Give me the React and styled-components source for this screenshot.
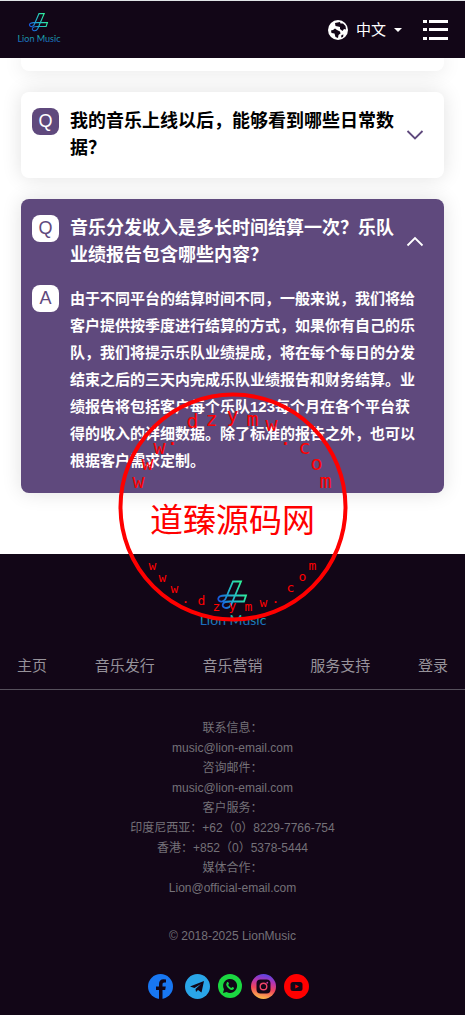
import React from "react";
import styled, { createGlobalStyle } from "styled-components";

const dark = "#120617";
const purple = "#5f497d";

const GlobalStyle = createGlobalStyle`
  * {
    box-sizing: border-box;
  }
  body {
    margin: 0;
    background: #fff;
    font-family: "Liberation Sans", "Noto Sans CJK SC", sans-serif;
  }
  h2, p, ul, nav {
    margin: 0;
    padding: 0;
  }
  a {
    color: inherit;
    text-decoration: none;
  }
  button {
    border: 0;
    background: none;
    font: inherit;
    color: inherit;
    padding: 0;
    cursor: pointer;
  }
`;

const Page = styled.div`
  position: relative;
  overflow: hidden;
`;

const Header = styled.header`
  position: relative;
  z-index: 1;
  display: flex;
  align-items: center;
  justify-content: space-between;
  height: 58px;
  padding: 0 17px;
  background: ${dark};
  border-top: 1px solid #dfe3e6;
`;

const HeaderTools = styled.div`
  display: flex;
  align-items: center;
`;

const LangButton = styled.button`
  display: flex;
  align-items: center;
  color: #fff;
  font-size: 15px;
  line-height: 24px;
  margin-right: 21px;
  span {
    margin: 0 8px;
  }
`;

const MenuButton = styled.button`
  display: flex;
`;

const FaqList = styled.main`
  display: flex;
  flex-direction: column;
  gap: 21px;
  padding: 0 21px 61px;
`;

const Card = styled.section`
  padding: 0 11px;
  border-radius: 8px;
  color: ${(p) => (p.$open ? "#fff" : "#000")};
  background: ${(p) => (p.$open ? purple : "#fff")};
  box-shadow: 0 0 20px rgba(0, 0, 0, 0.12);
`;

const CardEnd = styled(Card)`
  height: 13px;
  border-radius: 0 0 8px 8px;
`;

const Question = styled.button`
  display: flex;
  align-items: flex-start;
  width: 100%;
  padding: 16px 9px 16px 0;
  text-align: left;
  svg {
    flex: none;
    align-self: center;
  }
`;

const QuestionText = styled.span`
  flex: 1;
  font-size: 18px;
  font-weight: bold;
  line-height: 27px;
`;

const Answer = styled.div`
  display: flex;
  align-items: flex-start;
  padding: 0 16px 19px 0;
  p {
    flex: 1;
    font-size: 15px;
    font-weight: bold;
    line-height: 27px;
  }
`;

const Badge = styled.span`
  flex: none;
  width: 27px;
  height: 27px;
  margin-right: 11px;
  border-radius: 8px;
  font-size: 18px;
  line-height: 27px;
  text-align: center;
  color: ${(p) => (p.$light ? purple : "#fff")};
  background: ${(p) => (p.$light ? "#fff" : purple)};
`;

const Footer = styled.footer`
  display: flex;
  flex-direction: column;
  align-items: center;
  padding: 25px 0 16px;
  background: ${dark};
  color: #747178;
  font-size: 12px;
  line-height: 20px;
`;

const FooterNav = styled.nav`
  display: flex;
  justify-content: space-between;
  align-self: stretch;
  margin-top: 27px;
  padding: 0 17px 11px;
  border-bottom: 1px solid #56505c;
  color: #96929a;
  font-size: 15px;
  line-height: 24px;
`;

const Contact = styled.address`
  display: flex;
  flex-direction: column;
  align-items: center;
  padding: 28px 0;
  font-style: normal;
`;

const Social = styled.div`
  display: flex;
  margin-top: 28px;
  a {
    display: flex;
    margin-right: 8px;
  }
`;

const Stamp = styled.svg`
  position: absolute;
  z-index: 2;
  top: 392px;
  left: 50%;
  transform: translateX(-50%);
  pointer-events: none;
  text {
    font-family: "DejaVu Sans Mono", "Noto Sans CJK SC", monospace;
    fill: #f00;
    text-anchor: middle;
  }
`;

function Logo({ width, height, id }) {
  return (
    <svg width={width} height={height} viewBox="0 0 68 48" role="img" aria-label="Lion Music">
      <defs>
        <linearGradient id={id} gradientUnits="userSpaceOnUse" x1="20" y1="24" x2="46" y2="12">
          <stop offset="0" stopColor="#1650e0" />
          <stop offset="0.5" stopColor="#22b4cc" />
          <stop offset="1" stopColor="#2ff09a" />
        </linearGradient>
        <linearGradient id={id + "Text"} x1="0" y1="0" x2="0" y2="1">
          <stop offset="0.3" stopColor="#1cb5a8" />
          <stop offset="0.9" stopColor="#1a5cc4" />
        </linearGradient>
      </defs>
      <g fill="none" stroke={`url(#${id})`} strokeWidth="1.8">
        <path d="M26 21 L34 2.500 H42 L32 26 C29 31 22 29 24 25 C25 22 29 22.500 34 22.500 H45 L47 16.500 H26 C17 16.500 18 23 23 22.500 C26 22 27 19 28 16.500" />
      </g>
      <text
        x="34"
        y="46"
        textAnchor="middle"
        fontFamily="Lato, sans-serif"
        fontSize="14"
        fill={`url(#${id}Text)`}
      >
        Lion Music
      </text>
    </svg>
  );
}

function Globe() {
  return (
    <svg width="20" height="20" viewBox="0 0 20 20" aria-hidden="true">
      <circle cx="10" cy="10" r="10" fill="#fff" />
      <g fill={dark}>
        <path d="M7 3 L12 2 L12.500 3.500 L15 3.500 L17.500 6 L18 9.500 L16 9 L14.500 11 L12 9 L12 7 L10 6.500 L7.500 6 Z" />
        <path d="M3 10.500 L5 10 L7 8.500 L9 10 L12 11.500 L12.500 13.500 L10.500 15 L10 18 L7.500 17 L6.500 13.500 L3.500 13 Z" />
        <path d="M13.500 15 l2 -0.500 l-0.500 2.500 l-2 0.500 z" />
      </g>
    </svg>
  );
}

function Chevron({ up, color }) {
  return (
    <svg width="18" height="18" viewBox="0 0 18 18" aria-hidden="true">
      <path
        d={up ? "M1.500 12.500 L9 5 L16.500 12.500" : "M1.500 5 L9 12.500 L16.500 5"}
        fill="none"
        stroke={color}
        strokeWidth="1.8"
      />
    </svg>
  );
}

const nav = ["主页", "音乐发行", "音乐营销", "服务支持", "登录"];

const bigLetters = [
  ["w", 138, 488], ["w", 147, 470], ["w", 159, 454], [".", 172, 445],
  ["d", 192, 428], ["z", 211, 426], ["y", 232, 422], ["m", 252, 426],
  ["w", 271, 431], [".", 285, 445], ["c", 304, 454], ["o", 316, 470],
  ["m", 325, 488],
];

const smallLetters = [
  ["w", 152, 570], ["w", 162, 582], ["w", 174, 593], [".", 185, 603],
  ["d", 201, 605], ["z", 216, 611], ["y", 232, 610], ["m", 248, 611],
  ["w", 263, 607], [".", 275, 603], ["c", 290, 592], ["o", 302, 581],
  ["m", 312, 570],
];

export default function App() {
  return (
    <Page>
      <GlobalStyle />
      <Header>
        <a href="#home">
          <Logo width={44} height={31} id="headerLogo" />
        </a>
        <HeaderTools>
          <LangButton>
            <Globe />
            <span>中文</span>
            <svg width="8" height="4" viewBox="0 0 8 4" aria-hidden="true">
              <path d="M0 0 H8 L4 4 Z" fill="#fff" />
            </svg>
          </LangButton>
          <MenuButton aria-label="菜单">
            <svg width="25" height="22" viewBox="0 0 25 22" fill="#fff" aria-hidden="true">
              <path d="M0 1h4v3H0zM6 1h19v3H6zM0 9h4v3H0zM6 9h19v3H6zM0 18h4v3H0zM6 18h19v3H6z" />
            </svg>
          </MenuButton>
        </HeaderTools>
      </Header>

      <FaqList>
        <CardEnd />
        <Card>
          <Question aria-expanded="false">
            <Badge>Q</Badge>
            <QuestionText>我的音乐上线以后，能够看到哪些日常数据？</QuestionText>
            <Chevron color={purple} />
          </Question>
        </Card>
        <Card $open>
          <Question aria-expanded="true">
            <Badge $light>Q</Badge>
            <QuestionText>音乐分发收入是多长时间结算一次？乐队业绩报告包含哪些内容？</QuestionText>
            <Chevron up color="#fff" />
          </Question>
          <Answer>
            <Badge $light>A</Badge>
            <p>
              由于不同平台的结算时间不同，一般来说，我们将给客户提供按季度进行结算的方式，如果你有自己的乐队，我们将提示乐队业绩提成，将在每个每日的分发结束之后的三天内完成乐队业绩报告和财务结算。业绩报告将包括客户每个乐队123每个月在各个平台获得的收入的详细数据。除了标准的报告之外，也可以根据客户需求定制。
            </p>
          </Answer>
        </Card>
      </FaqList>

      <Footer>
        <Logo width={68} height={48} id="footerLogo" />
        <FooterNav>
          {nav.map((item) => (
            <a href="#nav" key={item}>{item}</a>
          ))}
        </FooterNav>
        <Contact>
          <span>联系信息：</span>
          <a href="mailto:music@lion-email.com">music@lion-email.com</a>
          <span>咨询邮件：</span>
          <a href="mailto:music@lion-email.com">music@lion-email.com</a>
          <span>客户服务：</span>
          <span>印度尼西亚：+62（0）8229-7766-754</span>
          <span>香港：+852（0）5378-5444</span>
          <span>媒体合作：</span>
          <a href="mailto:Lion@official-email.com">Lion@official-email.com</a>
        </Contact>
        <p>© 2018-2025 LionMusic</p>
        <Social>
          <a href="#facebook" aria-label="Facebook">
            <svg width="29" height="25" viewBox="0 0 29 25">
              <circle cx="12.500" cy="12.500" r="12.500" fill="#1877f2" />
              <path d="M11 25 V16 H8 V12.500 H11 V10 C11 7 12.700 5.300 15.500 5.300 L18 5.500 V8.500 H16.500 C15 8.500 14.500 9.400 14.500 10.400 V12.500 H17.800 L17.200 16 H14.500 V25 Z" fill={dark} />
            </svg>
          </a>
          <a href="#telegram" aria-label="Telegram">
            <svg width="25" height="25" viewBox="0 0 25 25">
              <circle cx="12.500" cy="12.500" r="12.500" fill="#2aa5e8" />
              <path d="M5 12.500 L19 7 L16.500 18.500 L13 16 L11 18 L10.500 15 L16 10 L9.500 14 Z" fill={dark} />
            </svg>
          </a>
          <a href="#whatsapp" aria-label="WhatsApp">
            <svg width="25" height="25" viewBox="0 0 25 25">
              <circle cx="12" cy="12" r="12" fill="#1bd741" />
              <path d="M5 19 L6 15.300 A7 7 0 1 1 8.700 18 Z" fill={dark} />
              <path d="M9 8.300 C9.500 7.700 10.300 7.900 10.500 8.500 L11 9.800 L10.200 11 C11 12.500 12 13.300 13.300 13.900 L14.400 12.900 L16 13.800 C16.200 15.300 15 16 13.700 15.900 C11 15.500 8.300 12.500 8.200 10.200 Z" fill="#1bd741" />
            </svg>
          </a>
          <a href="#instagram" aria-label="Instagram">
            <svg width="25" height="25" viewBox="0 0 25 25">
              <defs>
                <linearGradient id="insta" x1="0.6" y1="0" x2="0.4" y2="1">
                  <stop offset="0" stopColor="#5545e8" />
                  <stop offset="0.3" stopColor="#b535b0" />
                  <stop offset="0.6" stopColor="#f0455a" />
                  <stop offset="1" stopColor="#fbc04a" />
                </linearGradient>
              </defs>
              <circle cx="12.500" cy="12.500" r="12.500" fill="url(#insta)" />
              <rect x="5.500" y="5.500" width="14" height="14" rx="4" fill={dark} />
              <circle cx="12.500" cy="12.500" r="3.300" fill="none" stroke="#ee4468" strokeWidth="1.400" />
              <circle cx="16.300" cy="8.700" r="0.900" fill="#c438a8" />
            </svg>
          </a>
          <a href="#youtube" aria-label="YouTube">
            <svg width="25" height="25" viewBox="0 0 25 25">
              <circle cx="12.500" cy="12.500" r="12.500" fill="#f00" />
              <rect x="6.500" y="8" width="12" height="9" rx="2.500" fill={dark} />
              <path d="M11.300 10.500 L15 12.500 L11.300 14.500 Z" fill="#f00" />
            </svg>
          </a>
        </Social>
      </Footer>

      <Stamp width="231" height="231" viewBox="117 392 231 231">
        <circle cx="232.500" cy="507" r="112.500" fill="none" stroke="#f00" strokeWidth="4" />
        {bigLetters.map(([c, x, y]) => (
          <text key={x} x={x} y={y} fontSize="20">{c}</text>
        ))}
        <text x="232" y="532" fontSize="33">道臻源码网</text>
        {smallLetters.map(([c, x, y]) => (
          <text key={x} x={x} y={y} fontSize="13">{c}</text>
        ))}
      </Stamp>
    </Page>
  );
}
